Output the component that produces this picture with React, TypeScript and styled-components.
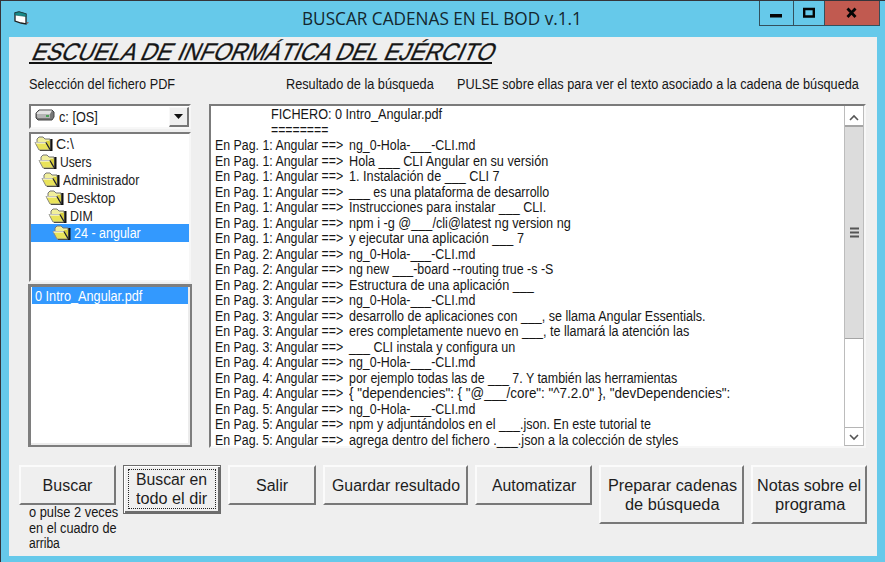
import React, { useLayoutEffect, useRef, useState } from "react";
import styled, { createGlobalStyle, css } from "styled-components";

const GlobalStyle = createGlobalStyle`
  * { box-sizing: border-box; }
  body { margin: 0; overflow: hidden; font-family: "Liberation Sans", Arial, sans-serif; color: #161616; }
`;

const FitBox = styled.span<{ $w: number }>`
  display: block;
  flex: none;
  width: ${(p) => p.$w}px;
  white-space: pre;
`;
const FitInner = styled.span`
  display: inline-block;
  transform-origin: 0 50%;
`;

/* Condenses a run of text horizontally so that it fills the given width. */
function Fit({ w, children }: { w: number; children: string }) {
  const ref = useRef<HTMLSpanElement>(null);
  const [scale, setScale] = useState(1);
  useLayoutEffect(() => {
    if (ref.current) setScale(w / ref.current.offsetWidth);
  }, [w, children]);
  return (
    <FitBox $w={w}>
      <FitInner ref={ref} style={{ transform: `scaleX(${scale})` }}>{children}</FitInner>
    </FitBox>
  );
}

const Window = styled.div`
  width: 885px;
  height: 562px;
  background: #66c9ea;
  border-top: 1px solid #35343a;
  border-left: 1px solid #35343a;
  display: flex;
  flex-direction: column;
`;

const TitleBar = styled.header`
  height: 36px;
  flex: none;
  display: flex;
  align-items: flex-start;
`;
const AppIcon = styled.svg`
  width: 17px;
  height: 15px;
  margin: 10px 0 0 12px;
`;
const Title = styled.h1`
  margin: 4px 0 0 272px;
  font: 400 17.5px/26px "Open Sans", "Noto Sans", sans-serif;
  color: #14262d;
`;
const WindowButtons = styled.div`
  display: flex;
  margin-left: 177px;
  height: 25px;
  border: 1px solid #33505d;
  border-top: 0;
`;
const WindowButton = styled.button<{ $w: number; $close?: boolean }>`
  width: ${(p) => p.$w}px;
  padding: 0;
  border: 0;
  border-left: ${(p) => (p.$w === 33 ? 0 : 1)}px solid #33505d;
  background: ${(p) => (p.$close ? "#c15a50" : "transparent")};
  svg { display: block; width: 100%; height: 24px; }
`;

const Client = styled.main`
  width: 868px;
  height: 519px;
  margin-left: 8px;
  background: #efefef;
  display: flex;
  flex-direction: column;
`;
const Heading = styled.h2`
  margin: 3px 0 0 20px;
  width: 463px;
  height: 24px;
  border-bottom: 2px solid #111;
  padding-left: 5px;
  font-weight: 400;
  font-size: 24px;
  line-height: 23px;
  -webkit-text-stroke: 0.3px #161616;
`;
const Slanted = styled.div`
  transform: skewX(-24deg);
  transform-origin: 0 50%;
`;
const Labels = styled.div`
  display: flex;
  height: 18px;
  margin: 11px 0 0 20px;
  font-size: 14px;
  line-height: 18px;
`;
const LabelGap = styled.i<{ $w: number }>`
  width: ${(p) => p.$w}px;
`;
const Panels = styled.div`
  display: flex;
  gap: 17px;
  height: 344px;
  margin: 11px 0 0 19px;
`;
const Sidebar = styled.div`
  width: 164px;
  display: flex;
  flex-direction: column;
`;
const sunken = css`
  background: #fff;
  border: 2px solid;
  border-color: #7b7b7b #f7f7f7 #f7f7f7 #7b7b7b;
`;
const Combo = styled.div`
  ${sunken}
  width: 162px;
  height: 25px;
  margin: 0 0 3px 1px;
  display: flex;
  align-items: center;
  font-size: 14px;
  padding-left: 4px;
  gap: 4px;
`;
const DriveIcon = styled.svg`
  width: 20px;
  height: 14px;
  margin-top: -3px;
`;
const raised = css`
  background: #efefef;
  border: 1px solid;
  border-color: #f8f8f8 #777 #777 #f8f8f8;
`;
const ComboButton = styled.span`
  ${raised}
  width: 20px;
  height: 20px;
  margin-left: auto;
  border-right-width: 2px;
  border-bottom-width: 2px;
  svg { display: block; }
`;
const DirList = styled.div`
  ${sunken}
  width: 162px;
  height: 150px;
  margin: 0 0 2px 1px;
  padding-top: 1px;
`;
const DirRow = styled.div<{ $level: number; $selected?: boolean }>`
  height: 17.9px;
  padding-left: ${(p) => 3 + p.$level * 3.6}px;
  display: flex;
  align-items: center;
  gap: 2px;
  font-size: 14px;
  line-height: 18px;
  background: ${(p) => (p.$selected ? "#3399fe" : "transparent")};
  color: ${(p) => (p.$selected ? "#fff" : "#222")};
`;
const FolderIcon = styled.svg`
  width: 20px;
  height: 16px;
  flex: none;
`;
const FileList = styled.div`
  height: 163px;
  border: 2px solid #7e7e7e;
  border-left-width: 3px;
  border-top-width: 3px;
  box-shadow: inset -2px -2px 0 #ececec;
  background: #fff;
  padding: 0 2px 0 1px;
`;
const FileRow = styled.div`
  height: 17px;
  padding-left: 3px;
  background: #3399fe;
  color: #fff;
  font-size: 14px;
  line-height: 18px;
`;
const Results = styled.div`
  ${sunken}
  width: 657px;
  display: flex;
`;
const Lines = styled.div`
  flex: 1;
  padding: 1px 0 0 4px;
`;
const Line = styled.div<{ $indent?: boolean }>`
  display: flex;
  gap: 6px;
  height: 15.5px;
  padding-left: ${(p) => (p.$indent ? 56 : 0)}px;
  font-size: 14px;
  line-height: 15.5px;
`;
const ScrollBar = styled.div`
  width: 20px;
  display: flex;
  flex-direction: column;
  border: solid #bcbcbc;
  border-width: 0 1px;
  background: #fff;
`;
const ScrollArrow = styled.button<{ $down?: boolean }>`
  height: 19px;
  padding: 0;
  border: solid #b5b5b5;
  border-width: ${(p) => (p.$down ? "1px 0" : "0")};
  margin-top: ${(p) => (p.$down ? "auto" : "0")};
  background: #fff;
  svg { display: block; width: 18px; height: 18px; }
`;
const Thumb = styled.div`
  height: 214px;
  background: #dcdcdc;
  border: solid #a5a5a5;
  border-width: 2px 0 1px;
  display: flex;
  align-items: center;
  justify-content: center;
`;
const Actions = styled.footer`
  display: flex;
  align-items: flex-start;
  margin: 17px 0 0 10px;
  gap: 7px;
`;
const Action = styled.button<{ $w: number; $h: number; $focused?: boolean }>`
  width: ${(p) => p.$w}px;
  height: ${(p) => p.$h}px;
  padding: 0;
  display: flex;
  flex-direction: column;
  align-items: center;
  justify-content: center;
  background: #efefef;
  border: 2px solid;
  border-color: #fbfbfb #787878 #787878 #fbfbfb;
  font: 400 16px/19px "Liberation Sans", Arial, sans-serif;
  color: #1d1d1d;
  ${(p) =>
    p.$focused &&
    css`
      border: 1px solid #6b6b6b;
      box-shadow: inset 1px 1px 0 #fff, inset -2px -2px 0 #6d6d6d;
      padding: 3px 4px 4px 3px;
    `}
`;
const FocusRing = styled.span`
  width: 88px;
  height: 40px;
  border: 1px dotted #222;
  display: flex;
  flex-direction: column;
  align-items: center;
  justify-content: center;
`;
const SearchColumn = styled.div`
  width: 97px;
`;
const Note = styled.p`
  margin: 0 0 0 10px;
  width: 92px;
  font-size: 14px;
  line-height: 15.5px;
`;

const NG = "ng_0-Hola-___-CLI.md";
const results: [number, string, number][] = [
  [1, NG, 126],
  [1, "Hola ___ CLI Angular en su versión", 199],
  [1, "1. Instalación de ___ CLI 7", 151],
  [1, "___ es una plataforma de desarrollo", 200],
  [1, "Instrucciones para instalar ___ CLI.", 197],
  [1, "npm i -g @___/cli@latest ng version ng", 222],
  [1, "y ejecutar una aplicación ___ 7", 175],
  [2, NG, 126],
  [2, "ng new ___-board --routing true -s -S", 204],
  [2, "Estructura de una aplicación ___", 185],
  [3, NG, 126],
  [3, "desarrollo de aplicaciones con ___, se llama Angular Essentials.", 356],
  [3, "eres completamente nuevo en ___, te llamará la atención las", 340],
  [3, "___ CLI instala y configura un", 166],
  [4, NG, 126],
  [4, "por ejemplo todas las de ___ 7. Y también las herramientas", 328],
  [4, "{ \"dependencies\": { \"@___/core\": \"^7.2.0\" }, \"devDependencies\":", 381],
  [5, NG, 126],
  [5, "npm y adjuntándolos en el ___.json. En este tutorial te", 302],
  [5, "agrega dentro del fichero .___.json a la colección de styles", 329],
];

const folders: [string, number][] = [
  ["C:\\", 18],
  ["Users", 32],
  ["Administrador", 76],
  ["Desktop", 48],
  ["DIM", 23],
  ["24 - angular", 67],
];

function Folder() {
  return (
    <FolderIcon viewBox="0 0 20 16">
      <path d="M15 3h3.500v12H6v-1.500h10z" fill="#111" />
      <path d="M3 6V3l2-2h4l2 2h5v10" fill="#f1ef9c" stroke="#777" />
      <path d="M12 5h4v8z" fill="#d8cf3e" />
      <path d="M1 6.500h11l4 7.500H5z" fill="#e9e35a" stroke="#8a8a80" />
      <path d="M1.500 7h10" stroke="#fff" />
      <path d="M12 6.500l4 7" stroke="#222" strokeWidth="1.200" />
    </FolderIcon>
  );
}

export default function App() {
  return (
    <Window>
      <GlobalStyle />
      <TitleBar>
        <AppIcon viewBox="0 0 17 15">
          <path d="M2 2l4-1 7 2v10l-5-1-6-2z" fill="#fff" stroke="#202020" strokeWidth="1.300" />
          <path d="M2 2l4-1 7 2v2.500L2 4z" fill="#168b8b" stroke="#155" strokeWidth=".6" />
          <path d="M14 11l2 .5-2 1.500z" fill="#a35b50" />
        </AppIcon>
        <Title><Fit w={280}>BUSCAR CADENAS EN EL BOD v.1.1</Fit></Title>
        <WindowButtons>
          <WindowButton $w={33} aria-label="Minimizar">
            <svg viewBox="0 0 33 24"><path d="M10 13h12v3.500H10z" fill="#050505" /></svg>
          </WindowButton>
          <WindowButton $w={31} aria-label="Maximizar">
            <svg viewBox="0 0 30 24"><path d="M10.200 8h9.600v7.500h-9.600z" fill="none" stroke="#050505" strokeWidth="2.400" /></svg>
          </WindowButton>
          <WindowButton $w={55} $close aria-label="Cerrar">
            <svg viewBox="0 0 54 24"><path d="M22.500 7.500l8 8.500M30.500 7.500l-8 8.500" stroke="#050505" strokeWidth="2.800" /></svg>
          </WindowButton>
        </WindowButtons>
      </TitleBar>
      <Client>
        <Heading>
          <Slanted><Fit w={462}>ESCUELA DE INFORMÁTICA DEL EJÉRCITO</Fit></Slanted>
        </Heading>
        <Labels>
          <Fit w={146}>Selección del fichero PDF</Fit>
          <LabelGap $w={111} />
          <Fit w={148}>Resultado de la búsqueda</Fit>
          <LabelGap $w={23} />
          <Fit w={402}>PULSE sobre ellas para ver el texto asociado a la cadena de búsqueda</Fit>
        </Labels>
        <Panels>
          <Sidebar>
            <Combo>
              <DriveIcon viewBox="0 0 20 14">
                <path d="M1 5l3-3h13l2 2v5l-2 3H3l-2-2z" fill="#777" stroke="#444" />
                <path d="M1.500 5l3-2.500H17L15 6H2z" fill="#e2e2e2" />
                <path d="M2 6h13v4H3l-1-1z" fill="#b5b5b5" />
                <path d="M11 8h3" stroke="#2b9b3b" strokeWidth="1.500" />
              </DriveIcon>
              <Fit w={39}>c: [OS]</Fit>
              <ComboButton>
                <svg width="17" height="17" viewBox="0 0 17 17"><path d="M4 6h9l-4.500 5z" fill="#111" /></svg>
              </ComboButton>
            </Combo>
            <DirList>
              {folders.map(([name, w], i) => (
                <DirRow key={name} $level={i} $selected={i === 5}>
                  <Folder />
                  <Fit w={w}>{name}</Fit>
                </DirRow>
              ))}
            </DirList>
            <FileList>
              <FileRow><Fit w={107}>0 Intro_Angular.pdf</Fit></FileRow>
            </FileList>
          </Sidebar>
          <Results>
            <Lines>
              <Line $indent><Fit w={171}>FICHERO: 0 Intro_Angular.pdf</Fit></Line>
              <Line $indent><Fit w={57}>========</Fit></Line>
              {results.map(([page, text, w], i) => (
                <Line key={i}>
                  <Fit w={128}>{`En Pag. ${page}: Angular ==>`}</Fit>
                  <Fit w={w}>{text}</Fit>
                </Line>
              ))}
            </Lines>
            <ScrollBar>
              <ScrollArrow aria-label="Subir">
                <svg viewBox="0 0 18 18"><path d="M5 13l4-4 4 4" fill="none" stroke="#555" strokeWidth="1.600" /></svg>
              </ScrollArrow>
              <Thumb>
                <svg width="9" height="11" viewBox="0 0 9 11"><path d="M0 1.500h9M0 5.500h9M0 9.500h9" stroke="#555" strokeWidth="2" /></svg>
              </Thumb>
              <ScrollArrow $down aria-label="Bajar">
                <svg viewBox="0 0 18 18"><path d="M5 7l4 4 4-4" fill="none" stroke="#555" strokeWidth="1.600" /></svg>
              </ScrollArrow>
            </ScrollBar>
          </Results>
        </Panels>
        <Actions>
          <SearchColumn>
            <Action $w={97} $h={40}><Fit w={50}>Buscar</Fit></Action>
            <Note>
              <Fit w={89}>o pulse 2 veces</Fit>
              <Fit w={88}>en el cuadro de</Fit>
              <Fit w={31}>arriba</Fit>
            </Note>
          </SearchColumn>
          <Action $w={98} $h={49} $focused>
            <FocusRing>
              <Fit w={71}>Buscar en</Fit>
              <Fit w={71}>todo el dir</Fit>
            </FocusRing>
          </Action>
          <Action $w={88} $h={40}><Fit w={32}>Salir</Fit></Action>
          <Action $w={145} $h={40}><Fit w={128}>Guardar resultado</Fit></Action>
          <Action $w={117} $h={40}><Fit w={84}>Automatizar</Fit></Action>
          <Action $w={145} $h={59}>
            <Fit w={129}>Preparar cadenas</Fit>
            <Fit w={95}>de búsqueda</Fit>
          </Action>
          <Action $w={116} $h={59}>
            <Fit w={104}>Notas sobre el</Fit>
            <Fit w={70}>programa</Fit>
          </Action>
        </Actions>
      </Client>
    </Window>
  );
}
